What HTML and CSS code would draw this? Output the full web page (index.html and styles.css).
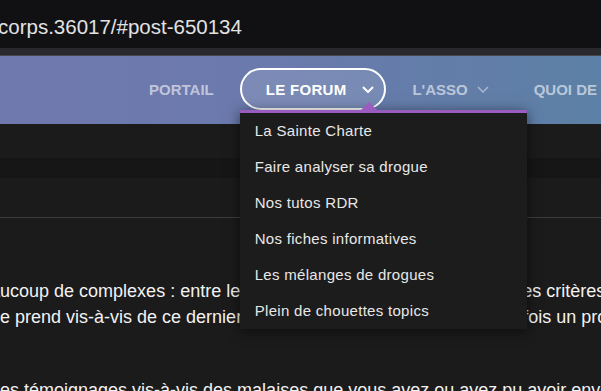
FILE: index.html
```html
<!DOCTYPE html>
<html lang="fr">
<head>
  <meta charset="UTF-8" />
  <title>Le corps - Forum</title>
  <link rel="stylesheet" href="styles.css">
</head>
<body>
  <div class="urlbar">
    <span class="url">corps.36017/#post-650134</span>
  </div>
  <div class="urlbar-edge"></div>

  <nav class="mainnav">
    <ul class="menu">
      <li class="menu-item"><a href="#">PORTAIL</a></li>
      <li class="menu-item is-open">
        <a href="#">LE FORUM</a>
        <svg class="chev" width="12" height="7" viewBox="0 0 12 7"><path d="M1 1l5 5 5-5" fill="none" stroke="#fff" stroke-width="2"/></svg>
        <ul class="dropdown">
          <li><a href="#">La Sainte Charte</a></li>
          <li><a href="#">Faire analyser sa drogue</a></li>
          <li><a href="#">Nos tutos RDR</a></li>
          <li><a href="#">Nos fiches informatives</a></li>
          <li><a href="#">Les mélanges de drogues</a></li>
          <li><a href="#">Plein de chouettes topics</a></li>
        </ul>
      </li>
      <li class="menu-item has-sub">
        <a href="#">L'ASSO</a>
        <svg class="chev" width="12" height="7" viewBox="0 0 12 7"><path d="M1 1l5 5 5-5" fill="none" stroke="#fff" stroke-width="1.5"/></svg>
      </li>
      <li class="menu-item"><a href="#">QUOI DE NEUF ?</a></li>
    </ul>
  </nav>

  <div class="subbar"></div>
  <div class="band"></div>
  <div class="spacer"></div>
  <div class="rule"></div>

  <div class="post">
    <p class="para">
      <span class="line line-a">beaucoup de complexes : entre le physique, le regard des autres et des critères de beauté</span>
      <span class="line line-b">ne prend vis-à-vis de ce dernier, qui nous renvoie trop souvent, parfois un profond malaise</span>
    </p>
    <p class="para">
      <span class="line line-b">des témoignages vis-à-vis des malaises que vous avez ou avez pu avoir envers votre corps</span>
    </p>
  </div>
</body>
</html>
```

FILE: styles.css
```css
body {
  margin: 0;
  background-color: #1b1b1b;
  font-family: 'Liberation Sans', Arial, sans-serif;
  overflow: hidden;
}

a {
  color: inherit;
  text-decoration: none;
}

/* barre d'adresse */
.urlbar {
  height: 48px;
  box-sizing: border-box;
  padding-top: 15px;
  background-color: #111113;
  white-space: nowrap;
}

.url {
  display: block;
  margin-left: -2px;
  font-size: 20.5px;
  line-height: 23px;
  color: #e2e2e4;
}

.urlbar-edge {
  height: 7px;
  background-color: #29292d;
  border-bottom: 1px solid #45454b;
}

/* menu principal */
.mainnav {
  height: 68px;
  background: linear-gradient(90deg, #7078ae 0%, #6a7aac 45%, #5c80a6 100%);
}

.menu {
  display: flex;
  align-items: flex-start;
  margin: 0;
  padding: 12px 0 0 123px;
  list-style: none;
  white-space: nowrap;
}

.menu-item {
  position: relative;
  display: flex;
  align-items: center;
  height: 42px;
  box-sizing: border-box;
  padding: 0 24px;
  border: 2px solid transparent;
  border-radius: 21px;
  font-size: 15px;
  font-weight: bold;
  color: rgba(255, 255, 255, 0.58);
}

.menu-item .chev {
  margin-left: 9px;
  opacity: 0.45;
}

.menu-item.has-sub {
  padding-right: 17px;
}

.menu-item.is-open {
  padding-right: 10px;
  border-color: #fff;
  background-color: rgba(255, 255, 255, 0.12);
  color: #fff;
}

.menu-item.is-open a {
  letter-spacing: 0.3px;
}

.menu-item.is-open .chev {
  margin-left: 16px;
  opacity: 1;
}

/* sous-menu */
.dropdown {
  position: absolute;
  top: calc(100% + 2px);
  left: -2px;
  z-index: 10;
  width: 287px;
  margin: 0;
  padding: 0;
  list-style: none;
  background-color: #1c1c1c;
  border-top: 3px solid #9a5dbf;
  box-shadow: 0 2px 12px rgba(0, 0, 0, 0.55);
}

.dropdown::before {
  content: "";
  position: absolute;
  top: -11px;
  left: 121px;
  border-left: 8px solid transparent;
  border-right: 8px solid transparent;
  border-bottom: 8px solid #9a5dbf;
}

.dropdown li a {
  display: block;
  height: 36px;
  line-height: 36px;
  padding: 0 15px;
  font-size: 15px;
  font-weight: normal;
  color: #e8e8e8;
}

/* contenu */
.subbar {
  height: 34px;
}

.band {
  height: 20px;
  background-color: #161616;
}

.spacer {
  height: 39px;
}

.rule {
  height: 1px;
  background-color: #3d3d3d;
}

.post {
  padding-top: 60px;
  font-size: 18px;
  line-height: 26px;
  color: #f2f2f2;
}

.para {
  margin: 0 0 47px;
}

.line {
  display: block;
  white-space: nowrap;
}

.line-a {
  margin-left: -30px;
}

.line-b {
  margin-left: -10px;
}
```
